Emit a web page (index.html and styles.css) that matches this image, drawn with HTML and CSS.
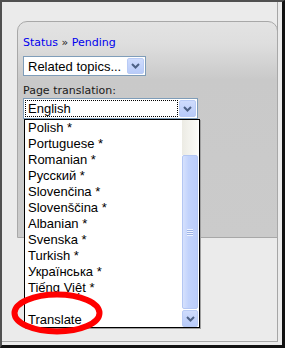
FILE: index.html
```html
<!DOCTYPE html>
<html lang="en">
  <head>
    <title>Page translation</title>
    <meta name="viewport" content="width=device-width, initial-scale=1.0">
    <link rel="stylesheet" href="styles.css">
  </head>
  <body>
    <div class="window">
      <div class="inner">
        <div class="panel">
          <div class="crumbs"><a href="#">Status</a> &raquo; <a href="#">Pending</a></div>
          <div class="select topics">
            <span class="value">Related topics...</span>
            <span class="arrow">
              <svg width="9" height="6" viewBox="0 0 9 6"><polyline points="1,1 4.5,4.5 8,1" fill="none" stroke="#4d6185" stroke-width="2"/></svg>
            </span>
          </div>
          <div class="label">Page translation:</div>
          <div class="picker">
            <div class="select lang">
              <span class="value focus">English</span>
              <span class="arrow">
                <svg width="9" height="6" viewBox="0 0 9 6"><polyline points="1,1 4.5,4.5 8,1" fill="none" stroke="#4d6185" stroke-width="2"/></svg>
              </span>
            </div>
            <div class="listbox">
              <ul class="options">
                <li>Polish *</li>
                <li>Portuguese *</li>
                <li>Romanian *</li>
                <li>Русский *</li>
                <li>Slovenčina *</li>
                <li>Slovenščina *</li>
                <li>Albanian *</li>
                <li>Svenska *</li>
                <li>Turkish *</li>
                <li>Українська *</li>
                <li>Tiếng Việt *</li>
                <li>&nbsp;</li>
                <li>Translate</li>
              </ul>
              <div class="scrollbar">
                <div class="track"></div>
                <div class="thumb"><span class="grip"></span></div>
                <div class="down">
                  <svg width="9" height="6" viewBox="0 0 9 6"><polyline points="1,1 4.5,4.5 8,1" fill="none" stroke="#4d6185" stroke-width="2"/></svg>
                </div>
              </div>
            </div>
          </div>
        </div>
      </div>
      <svg class="ring" width="110" height="56" viewBox="0 0 110 56">
        <ellipse cx="47" cy="27" rx="42.5" ry="18.5" fill="none" stroke="#ff0000" stroke-width="6"/>
      </svg>
    </div>
  </body>
</html>
```
FILE: styles.css
```css
body {
  margin: 0;
  background-color: #ebebeb;
}
.window {
  position: relative;
  width: 285px;
  height: 348px;
  box-sizing: border-box;
  border-left: 2px solid #505050;
  border-top: 2px solid #505050;
  border-right: 3px solid #111;
  border-bottom: 3px solid #111;
  background-color: #ebebeb;
}
.inner {
  width: 260px;
  height: 320px;
  padding: 19px 0 0 15px;
  border-right: 1px solid #a6a6a6;
  border-bottom: 1px solid #a6a6a6;
}
.panel {
  width: 261px;
  height: 217px;
  box-sizing: border-box;
  padding: 14px 0 0 5px;
  border: 1px solid #a8a8a8;
  border-radius: 10px 10px 0 0;
  background: linear-gradient(#e3e3e3 0, #dedede 22px, #c9c9c9 58px, #cbcbcb 100%);
}
.crumbs {
  font-family: "DejaVu Sans", Verdana, sans-serif;
  font-size: 11px;
  line-height: 13px;
  color: #222;
}
.crumbs a {
  color: #0000ee;
  text-decoration: none;
}
.label {
  margin-top: 8px;
  font-family: "DejaVu Sans", Verdana, sans-serif;
  font-size: 11px;
  line-height: 13px;
  color: #1a1a1a;
}
.select {
  display: flex;
  box-sizing: border-box;
  padding: 1px;
  border: 1px solid #7f9db9;
  background-color: #fff;
  font-family: "Liberation Sans", Arial, sans-serif;
  font-size: 13px;
  color: #000;
}
.select .value {
  flex: 1;
  padding: 1px 0 0 3px;
  line-height: 16px;
}
.select .arrow {
  display: flex;
  align-items: center;
  justify-content: center;
  width: 15px;
  border: 1px solid #b9cbf5;
  border-radius: 2px;
  background: linear-gradient(#cfdcfd, #b8cbf9);
}
.topics {
  width: 123px;
  height: 20px;
  margin-top: 7px;
}
.picker {
  position: relative;
  width: 175px;
  margin-top: 1px;
}
.lang {
  width: 175px;
  height: 21px;
}
.lang .value {
  padding-left: 3px;
  padding-top: 0;
  line-height: 17px;
  outline: 1px dotted #000;
  outline-offset: -1px;
  margin-right: 1px;
}
.listbox {
  position: absolute;
  left: 1px;
  top: 21px;
  width: 176px;
  height: 209px;
  box-sizing: border-box;
  display: flex;
  border: 1px solid #000;
  background-color: #fff;
  box-shadow: 1px 1px 0 #a0a0a0;
}
.options {
  flex: 1;
  margin: 0;
  padding: 0 0 0 3px;
  list-style: none;
  font-family: "Liberation Sans", Arial, sans-serif;
  font-size: 13px;
  line-height: 16px;
  color: #000;
}
.scrollbar {
  display: flex;
  flex-direction: column;
  width: 16px;
  margin-right: 1px;
}
.track {
  height: 35px;
  background: linear-gradient(to right, #ecebe4, #fbfbf8);
}
.thumb {
  flex: 1;
  display: flex;
  align-items: center;
  justify-content: center;
  border: 1px solid #b4c7f3;
  border-radius: 2px;
  background: linear-gradient(to right, #d6e1fd, #c2d3fc 40%, #bccdfa);
}
.grip {
  width: 6px;
  height: 7px;
  background: repeating-linear-gradient(#eef3ff 0, #eef3ff 1px, #9db3e6 1px, #9db3e6 2px);
}
.down {
  display: flex;
  align-items: center;
  justify-content: center;
  height: 17px;
  margin-top: 1px;
  box-sizing: border-box;
  border: 1px solid #b9cbf5;
  border-radius: 2px;
  background: linear-gradient(#cfdcfd, #b8cbf9);
}
.ring {
  position: absolute;
  left: 8px;
  top: 284px;
}
```
